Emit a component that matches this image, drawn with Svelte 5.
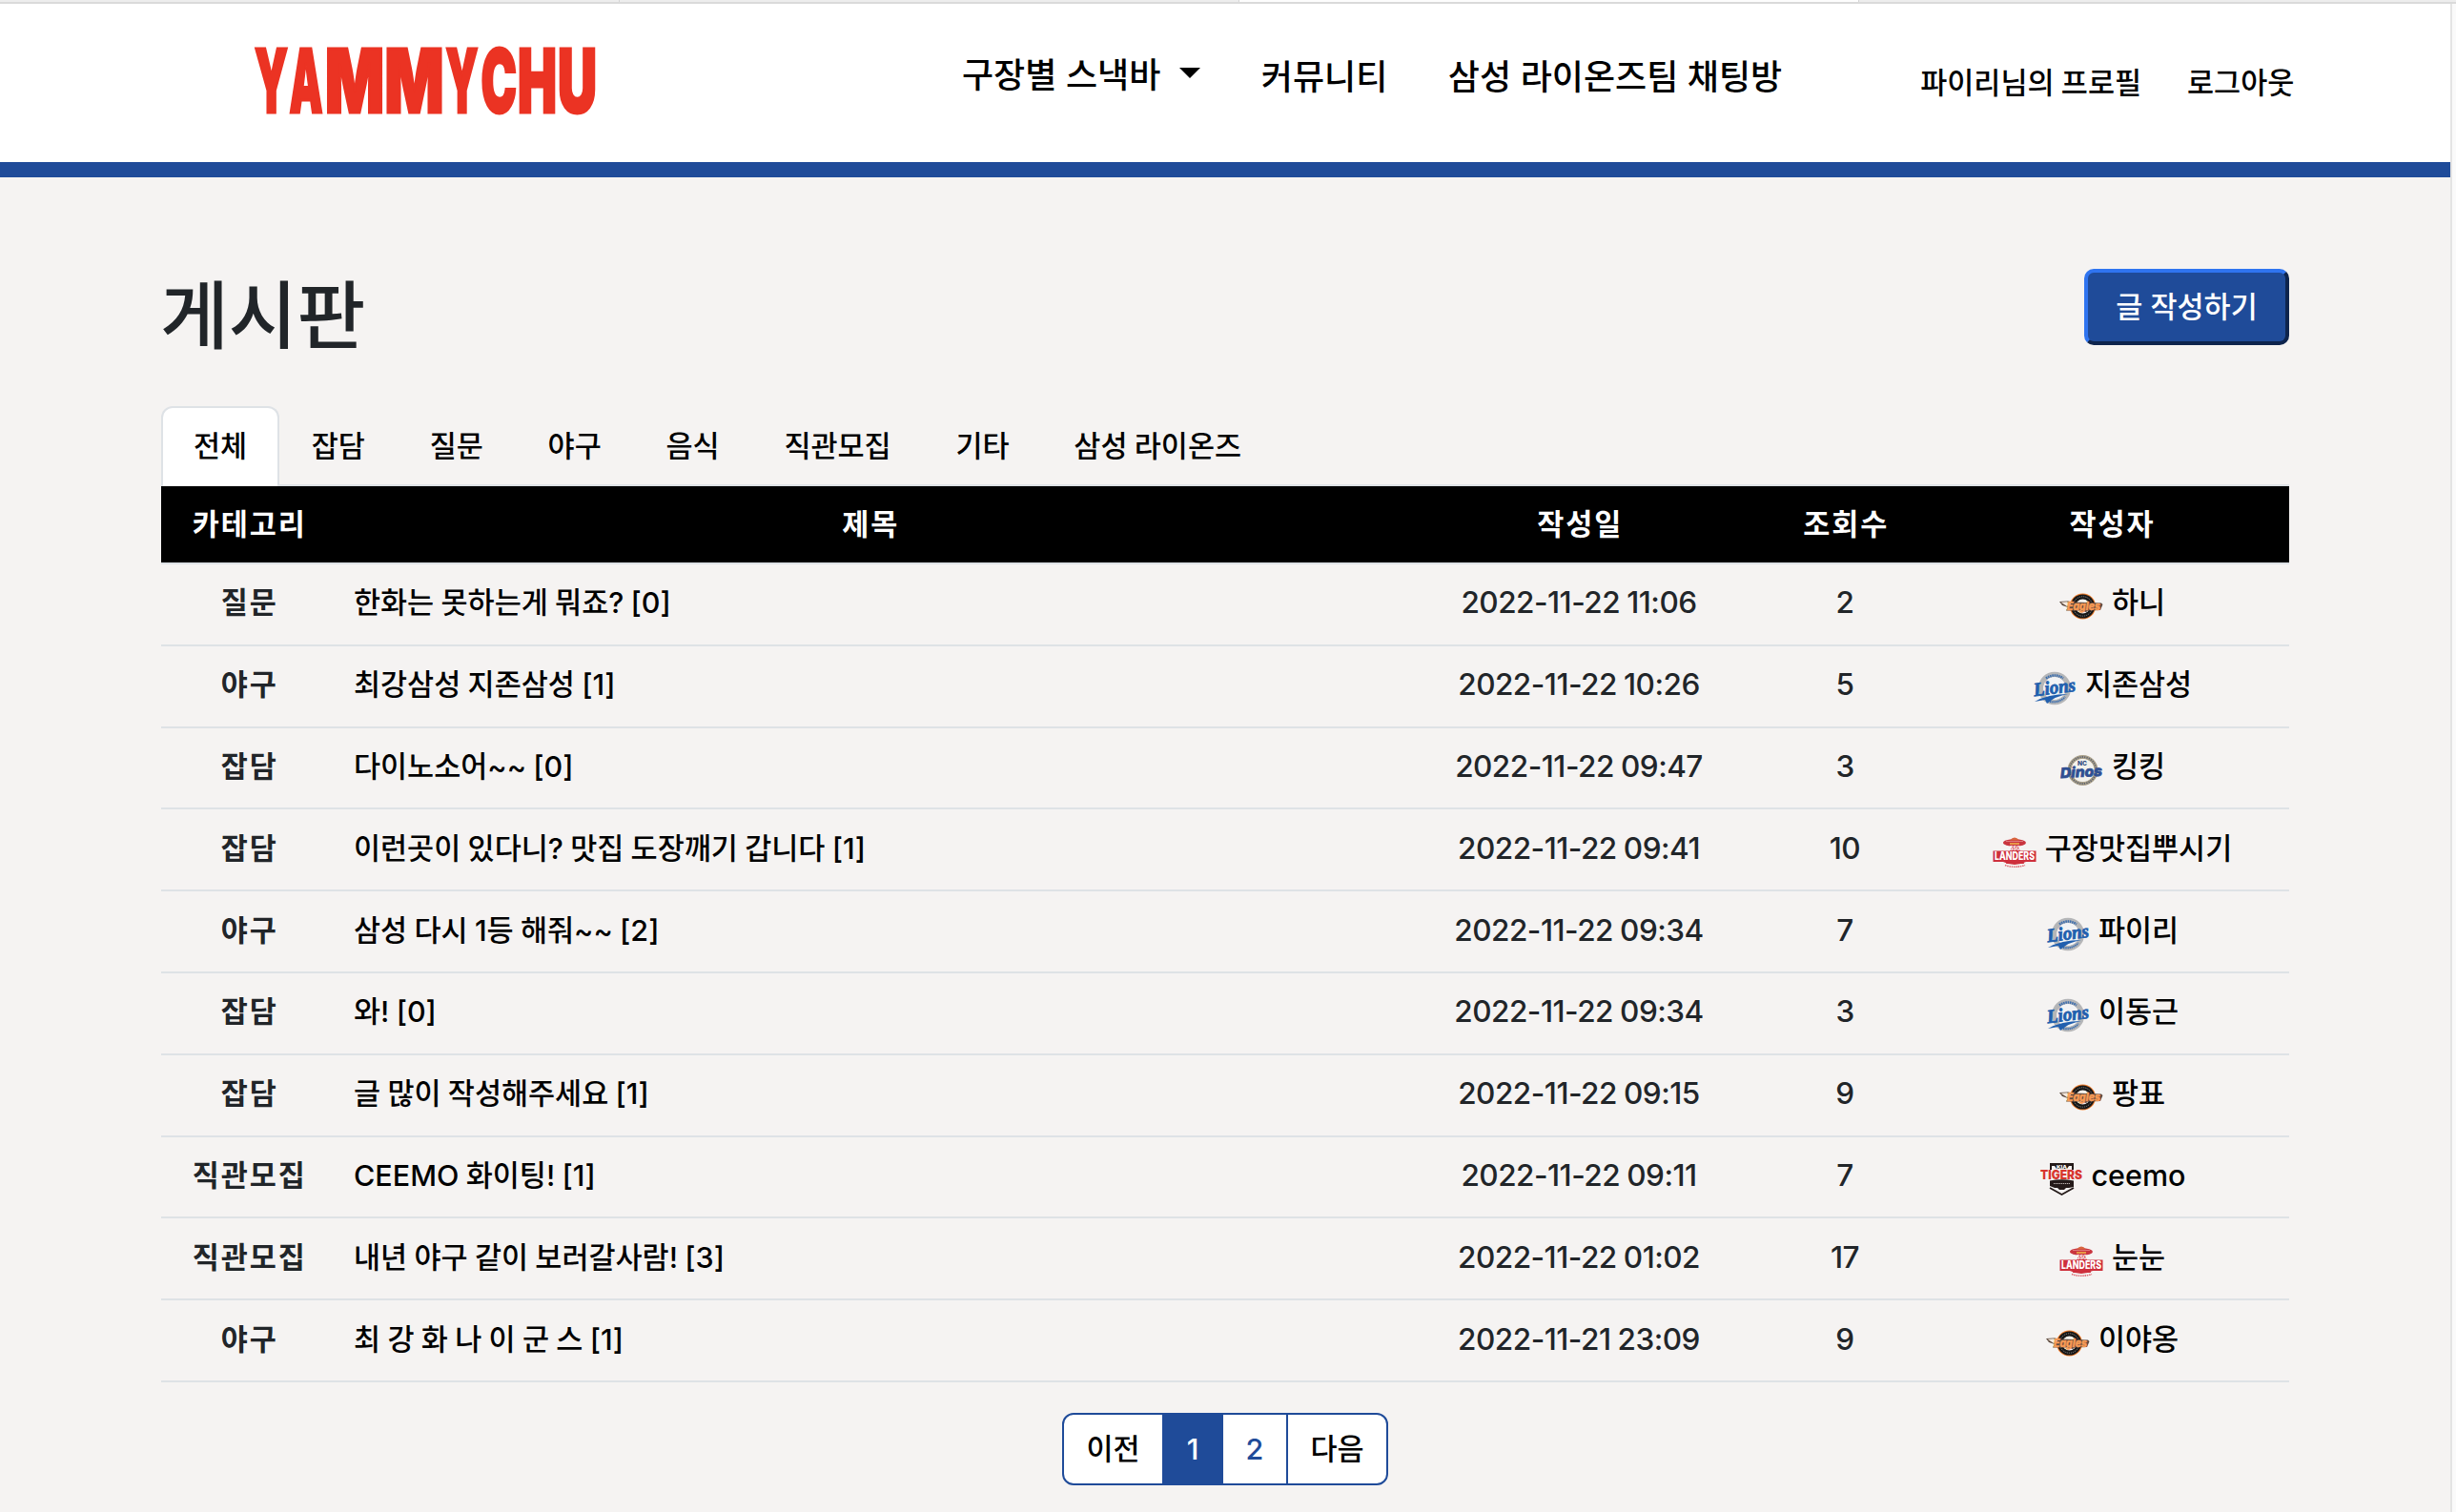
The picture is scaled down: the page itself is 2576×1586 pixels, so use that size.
<script>
  // Wordmark letters: [glyph, left edge, advance]
  const wordmark = [
    ['Y', 3, 35], ['A', 39.5, 35], ['M', 77, 62], ['M', 139.5, 62],
    ['Y', 203.5, 34], ['C', 240.5, 37.5], ['H', 279, 41], ['U', 321, 41]
  ];
  const tabs = ['전체', '잡담', '질문', '야구', '음식', '직관모집', '기타', '삼성 라이온즈'];
  const posts = [
    { cat: '질문', title: '한화는 못하는게 뭐죠? [0]', date: '2022-11-22 11:06', views: 2, team: 'eagles', author: '하니' },
    { cat: '야구', title: '최강삼성 지존삼성 [1]', date: '2022-11-22 10:26', views: 5, team: 'lions', author: '지존삼성' },
    { cat: '잡담', title: '다이노소어~~ [0]', date: '2022-11-22 09:47', views: 3, team: 'dinos', author: '킹킹' },
    { cat: '잡담', title: '이런곳이 있다니? 맛집 도장깨기 갑니다 [1]', date: '2022-11-22 09:41', views: 10, team: 'landers', author: '구장맛집뿌시기' },
    { cat: '야구', title: '삼성 다시 1등 해줘~~ [2]', date: '2022-11-22 09:34', views: 7, team: 'lions', author: '파이리' },
    { cat: '잡담', title: '와! [0]', date: '2022-11-22 09:34', views: 3, team: 'lions', author: '이동근' },
    { cat: '잡담', title: '글 많이 작성해주세요 [1]', date: '2022-11-22 09:15', views: 9, team: 'eagles', author: '팡표' },
    { cat: '직관모집', title: 'CEEMO 화이팅! [1]', date: '2022-11-22 09:11', views: 7, team: 'tigers', author: 'ceemo' },
    { cat: '직관모집', title: '내년 야구 같이 보러갈사람! [3]', date: '2022-11-22 01:02', views: 17, team: 'landers', author: '눈눈' },
    { cat: '야구', title: '최 강 화 나 이 군 스 [1]', date: '2022-11-21 23:09', views: 9, team: 'eagles', author: '이야옹' }
  ];
</script>

{#snippet logo(team)}
  <svg class="team" viewBox="0 0 46 36">
    {#if team === 'eagles'}
      <circle cx="24.500" cy="18" r="13.600" fill="#f07c2a" />
      <circle cx="24.500" cy="18" r="12.600" fill="#171717" />
      <circle cx="24.500" cy="18" r="10.200" fill="none" stroke="#8a8a8a" stroke-width="1" stroke-dasharray="1.200 1" />
      <circle cx="24.500" cy="18" r="7.600" fill="#f4f1ec" />
      <path d="M0 13 L9 12.500 L13 13.500 L44 14.500 L45.500 16 L43 22 L30 22.500 L28 24 L22 22.500 L7 22.500 L9 19 L3 17 Z" fill="#5d4a3e" />
      <path d="M1.500 13.800 L8 13.300 L12 15.500 L8 18 Z" fill="#f4e9df" />
      <text x="8" y="21.500" textLength="35" lengthAdjust="spacingAndGlyphs" font-size="11.500" font-style="italic" font-weight="800" fill="#f79a55" stroke="#f79a55" stroke-width=".5">Eagles</text>
    {:else if team === 'lions'}
      <circle cx="23" cy="18" r="14.400" fill="none" stroke="#b5b6b8" stroke-width="5.500" />
      <circle cx="23" cy="18" r="11.800" fill="#f2f3f5" />
      <path d="M14 7.500 Q23 1.500 32 7.500" fill="none" stroke="#3d6ead" stroke-width="2.600" stroke-dasharray="1.600 .7" />
      <path d="M18 32 Q28 33.500 34 27" fill="none" stroke="#3d6ead" stroke-width="2" stroke-dasharray="1.400 .7" />
      <path d="M2 32 Q16 24 37 24 Q24 26 15 34 L13 30 Z" fill="#215fae" />
      <text transform="rotate(-7 23 18)" x="1" y="23.500" textLength="44" lengthAdjust="spacingAndGlyphs" class="script" font-size="20" font-style="italic" font-weight="700" fill="#215fae" stroke="#215fae" stroke-width=".8">Lions</text>
    {:else if team === 'dinos'}
      <circle cx="24.500" cy="18" r="14" fill="none" stroke="#a99f89" stroke-width="4" />
      <circle cx="24.500" cy="18" r="14" fill="none" stroke="#5c6270" stroke-width="1.800" stroke-dasharray="1.200 1.200" />
      <circle cx="24.500" cy="18" r="11.800" fill="#f3f1ec" />
      <text x="19" y="13" textLength="10" lengthAdjust="spacingAndGlyphs" font-size="6.500" font-weight="800" fill="#2f4b80">NC</text>
      <text transform="rotate(-3 23 20)" x="1" y="25" textLength="44" lengthAdjust="spacingAndGlyphs" font-size="15" font-style="italic" font-weight="800" fill="#2f4f92" stroke="#2f4f92" stroke-width=".7">Dinos</text>
    {:else if team === 'landers'}
      <path d="M20 11 H27 L33 30 H14 Z" fill="#ce2f3c" />
      <ellipse cx="23" cy="8" rx="12" ry="3.800" fill="#c9353f" />
      <path d="M18 5.500 Q23 -.5 28 5.500 Z" fill="#d9653f" />
      <path d="M18 9 H28" stroke="#f0b04a" stroke-width="1.600" />
      <path d="M14 6.500 H32" stroke="#e58a8a" stroke-width=".8" />
      <text x="18" y="16" textLength="11" lengthAdjust="spacingAndGlyphs" font-size="5.500" font-weight="800" fill="#fff">SSG</text>
      <path d="M.5 16.500 H45.500 V28 H35 Q23 34 11 28 H.5 Z" fill="#ce2f3c" />
      <text x="2" y="26" textLength="42" lengthAdjust="spacingAndGlyphs" font-size="11.500" font-weight="800" fill="#fff">LANDERS</text>
      <path d="M13 31.500 Q23 35 34 31.500" fill="none" stroke="#dd6a72" stroke-width="1.600" stroke-dasharray="1.500 .8" />
    {:else}
      <path d="M11 1 H36 V8 H34 V4 H31 L29 7 H18 L16 4 H13 V8 H11 Z" fill="#241a19" />
      <text x="18" y="6.500" textLength="11" lengthAdjust="spacingAndGlyphs" font-size="4.500" font-weight="800" fill="#fff">KIA</text>
      <path d="M11 19.500 Q23.500 17 36 19.500 V26 L31 27 H28 L26 29 H21 L19 27 H16 L11 25 Z" fill="#241a19" />
      <path d="M15 22.500 H32" stroke="#b9b0ae" stroke-width="1.200" stroke-dasharray="1.300 .7" />
      <path d="M11 27 L23.500 34 L36 27" fill="none" stroke="#241a19" stroke-width="1.800" />
      <text x="1" y="18" textLength="44" lengthAdjust="spacingAndGlyphs" font-size="12.500" font-weight="900" fill="#d8362f">TIGERS</text>
    {/if}
  </svg>
{/snippet}

<div class="screen">
  <div class="chrome"><i></i><i></i><i class="on"></i><i></i></div>
  <div class="view">
    <div class="page">
      <header>
        <svg class="brand" viewBox="0 0 362 76">
          <text y="77">{#each wordmark as [ch, x, w]}<tspan {x} textLength={w} lengthAdjust="spacingAndGlyphs">{ch}</tspan>{/each}</text>
        </svg>
        <nav class="main">
          <a class="drop" href="#stadium">구장별 스낵바<span class="caret"></span></a>
          <a href="#community">커뮤니티</a>
          <a href="#chat">삼성 라이온즈팀 채팅방</a>
        </nav>
        <nav class="user">
          <a href="#profile">파이리님의 프로필</a>
          <a href="#logout">로그아웃</a>
        </nav>
      </header>

      <main>
        <div class="top">
          <h1>게시판</h1>
          <button>글 작성하기</button>
        </div>
        <div class="tabs">
          {#each tabs as tab, i}
            <div class="tab" class:active={i === 0}>{tab}</div>
          {/each}
        </div>
        <div class="row head">
          <b>카테고리</b><b>제목</b><b>작성일</b><b>조회수</b><b>작성자</b>
        </div>
        {#each posts as p}
          <div class="row">
            <b>{p.cat}</b>
            <span class="title">{p.title}</span>
            <span class="num">{p.date}</span>
            <span class="num">{p.views}</span>
            <span class="author">{@render logo(p.team)}<span>{p.author}</span></span>
          </div>
        {/each}
        <div class="pager">
          <span class="prev">이전</span><span class="current">1</span><span class="page2">2</span><span class="next">다음</span>
        </div>
      </main>
    </div>
    <div class="scroll"></div>
  </div>
</div>

<style>
  :global(body) { background: #f5f3f2; overflow: hidden; }
  .screen {
    width: 2576px; height: 1586px; overflow: hidden;
    display: flex; flex-direction: column;
    font-family: Inter, 'Noto Sans CJK KR', sans-serif;
    font-weight: 500; font-size: 30.500px; line-height: 44px; color: #000;
    word-spacing: -.8px;
  }
  .chrome { height: 4px; box-sizing: border-box; border-bottom: 2px solid #dadada; display: flex; background: #ededed; flex: none; }
  .chrome i { width: 650px; flex: none; box-sizing: border-box; border-right: 1px solid #d5d5d5; }
  .chrome .on { background: #fdfdfd; }
  .view { flex: 1; display: flex; }
  .page { width: 2570px; background: #f5f3f2; }
  .scroll { width: 4px; border-left: 2px solid #e4e4e4; background: #fafafa; }
  a { color: #000; text-decoration: none; white-space: nowrap; }
  header { height: 166px; background: #fff; border-bottom: 16px solid #1f4b99; display: flex; align-items: flex-start; }
  .brand { width: 362px; height: 76px; margin: 37px 0 0 264px; flex: none; overflow: visible; }
  .brand text { font-family: Inter, sans-serif; font-weight: 900; font-size: 92px; fill: #eb3323; stroke: #eb3323; stroke-width: 3px; word-spacing: 0; }
  .main { display: flex; margin: 51px 0 0 383px; font-size: 36px; line-height: 52px; gap: 63.500px; word-spacing: 0; }
  .drop { display: flex; align-items: center; margin-top: -2px; height: 52px; }
  .caret { border: 11px solid transparent; border-top-color: #000; border-bottom: 0; margin-left: 20px; margin-top: -6px; }
  .user { display: flex; gap: 48px; margin: 61px 0 0 145px; }

  main { padding: 0 169px; }
  .top { height: 240px; display: flex; justify-content: space-between; align-items: flex-start; }
  h1 { margin: 96px 0 0 -1px; font-size: 78px; line-height: 100px; font-weight: 500; color: #212529; }
  button {
    margin-top: 96px; width: 215px; height: 80px; padding: 0; border-radius: 10px;
    border: 4px solid; border-color: #2f74f0 #0e244d #0e244d #2f74f0;
    background: #1f4b99; color: #fff; font: inherit;
  }
  .tabs { display: flex; height: 84px; box-sizing: border-box; border-bottom: 2px solid #dee2e6; }
  .tab { height: 84px; box-sizing: border-box; padding: 18px 31.900px 0; border: 2px solid transparent; border-bottom: 0; border-radius: 12px 12px 0 0; white-space: nowrap; }
  .active { background: #fff; border-color: #dee2e6; }
  .row {
    display: grid; grid-template-columns: 183px 1120px 368px 190px 371px;
    height: 85.800px; box-sizing: border-box; border-bottom: 2px solid #dee2e6;
    align-items: center; justify-items: center; padding-bottom: 3px; color: #212529;
  }
  .row.head { height: 82px; background: #000; background-clip: padding-box; color: #fff; padding-bottom: 0; }
  b { font-weight: 700; letter-spacing: 1.900px; padding-left: 2.500px; }
  .head b:last-child { padding-left: 0; }
  .title { justify-self: start; padding-left: 19px; color: #000; }
  .num { letter-spacing: -.5px; font-size: 31.500px; }
  .author { display: flex; align-items: center; gap: 9px; color: #000; }
  .team { width: 46px; height: 36px; margin-top: 8px; overflow: visible; font-family: Inter, sans-serif; }
  .team text { letter-spacing: 0; word-spacing: 0; }
  .script { font-family: 'Liberation Serif', serif; }
  .pager { width: 342px; height: 76px; margin: 32px auto 0; box-sizing: border-box; border: 2px solid #1f4b99; border-radius: 12px; overflow: hidden; display: flex; background: #fff; }
  .pager span { display: flex; align-items: center; justify-content: center; }
  .prev { width: 103px; }
  .current { width: 64px; background: #1f4b99; color: #fff; }
  .page2 { width: 66px; color: #1f4b99; border-right: 2px solid #1f4b99; }
  .next { flex: 1; }
</style>
